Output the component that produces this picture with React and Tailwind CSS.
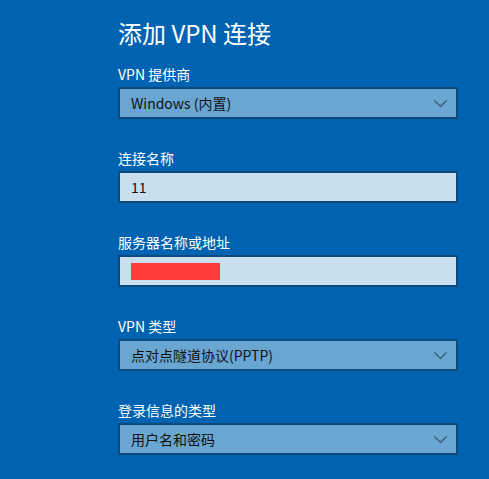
import { ChevronDown } from 'lucide-react';

const font = { fontFamily: '"Noto Sans CJK SC", "Noto Sans", sans-serif' };

function Chevron() {
  return (
    <svg width="13" height="7" viewBox="0 0 13 7" className="shrink-0">
      <path d="M0.5 0.5 L6.5 6.5 L12.5 0.5" fill="none" stroke="#3a5670" strokeWidth="1.2" />
    </svg>
  );
}

function Field({ label, children, select, className = '' }) {
  return (
    <div className={className}>
      <p className="text-[14px] leading-[20px] text-white">{label}</p>
      <div
        className={`mt-[3px] flex h-[32px] w-[340px] items-center justify-between border-2 border-[#0f4a7c] pl-[11px] pr-[9px] text-[14px] text-[#111] ${
          select ? 'bg-[#6aa6d2]' : 'bg-[#c9dfee]'
        }`}
      >
        {children}
        {select && <Chevron />}
      </div>
    </div>
  );
}

export default function App() {
  return (
    <div className="min-h-screen w-full overflow-hidden bg-[#0063b1]" style={font}>
      <div className="pl-[118px] pt-[17px]">
        <h1 className="text-[24px] leading-[32px] text-white">添加 VPN 连接</h1>
        <Field label="VPN 提供商" select className="mt-[15px]">
          <span>Windows (内置)</span>
        </Field>
        <Field label="连接名称" className="mt-[29px]">
          <span>11</span>
        </Field>
        <Field label="服务器名称或地址" className="mt-[29px]">
          <span className="block h-[17px] w-[89px] bg-[#ff3b3b]" />
        </Field>
        <Field label="VPN 类型" select className="mt-[29px]">
          <span>点对点隧道协议(PPTP)</span>
        </Field>
        <Field label="登录信息的类型" select className="mt-[29px]">
          <span>用户名和密码</span>
        </Field>
      </div>
    </div>
  );
}
